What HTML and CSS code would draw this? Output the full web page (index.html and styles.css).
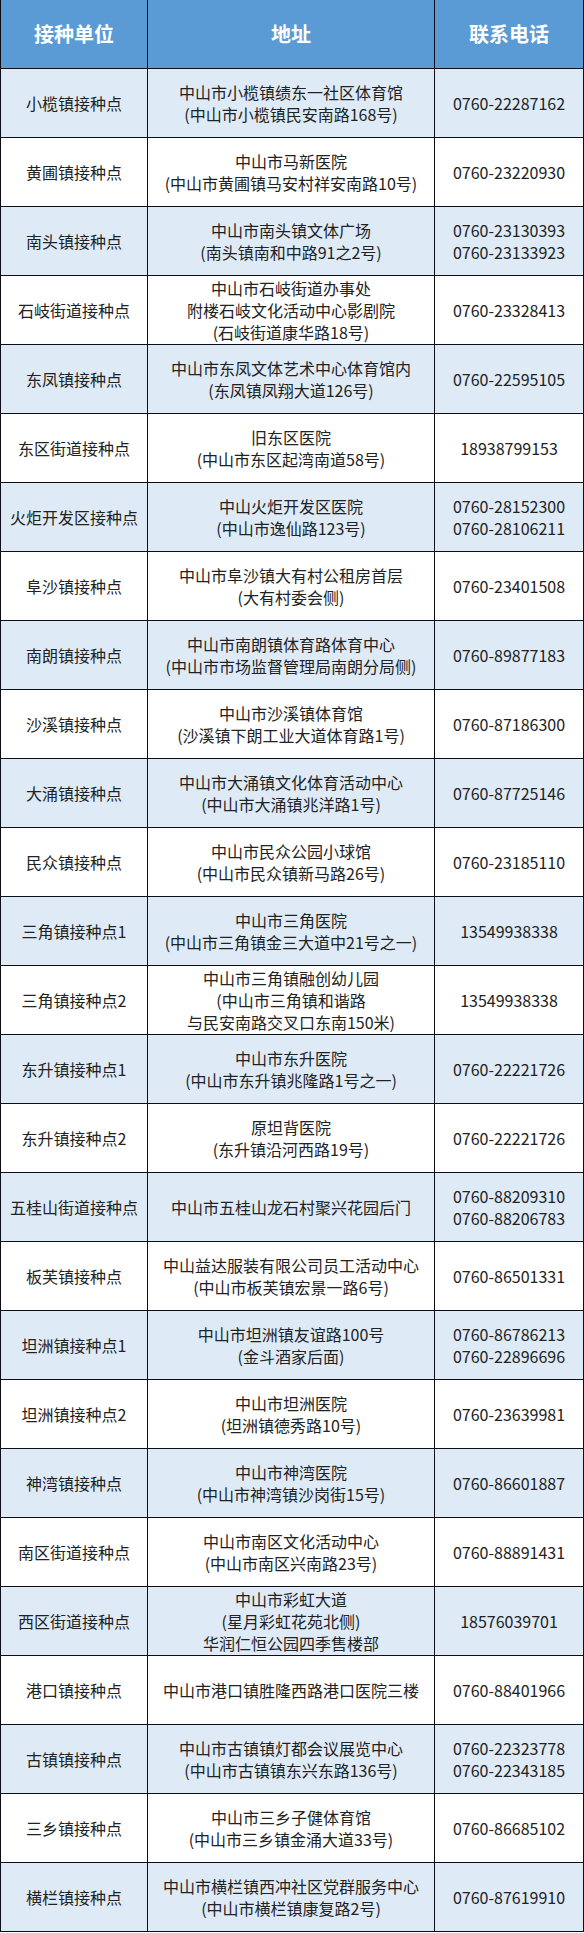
FILE: index.html
```html
<!DOCTYPE html>
<html lang="zh-CN">
<head>
<meta charset="utf-8">
<title>接种单位</title>
<link rel="stylesheet" href="styles.css">
</head>
<body>
<div class="table">
  <div class="row head"><div class="cell c1">接种单位</div><div class="cell c2">地址</div><div class="cell c3">联系电话</div></div>

  <div class="row alt"><div class="cell c1">小榄镇接种点</div><div class="cell c2"><span>中山市小榄镇绩东一社区体育馆</span><span>(中山市小榄镇民安南路168号)</span></div><div class="cell c3"><span>0760-22287162</span></div></div>
  <div class="row"><div class="cell c1">黄圃镇接种点</div><div class="cell c2"><span>中山市马新医院</span><span>(中山市黄圃镇马安村祥安南路10号)</span></div><div class="cell c3"><span>0760-23220930</span></div></div>
  <div class="row alt"><div class="cell c1">南头镇接种点</div><div class="cell c2"><span>中山市南头镇文体广场</span><span>(南头镇南和中路91之2号)</span></div><div class="cell c3"><span>0760-23130393</span><span>0760-23133923</span></div></div>
  <div class="row"><div class="cell c1">石岐街道接种点</div><div class="cell c2"><span>中山市石岐街道办事处</span><span>附楼石岐文化活动中心影剧院</span><span>(石岐街道康华路18号)</span></div><div class="cell c3"><span>0760-23328413</span></div></div>
  <div class="row alt"><div class="cell c1">东凤镇接种点</div><div class="cell c2"><span>中山市东凤文体艺术中心体育馆内</span><span>(东凤镇凤翔大道126号)</span></div><div class="cell c3"><span>0760-22595105</span></div></div>
  <div class="row"><div class="cell c1">东区街道接种点</div><div class="cell c2"><span>旧东区医院</span><span>(中山市东区起湾南道58号)</span></div><div class="cell c3"><span>18938799153</span></div></div>
  <div class="row alt"><div class="cell c1">火炬开发区接种点</div><div class="cell c2"><span>中山火炬开发区医院</span><span>(中山市逸仙路123号)</span></div><div class="cell c3"><span>0760-28152300</span><span>0760-28106211</span></div></div>
  <div class="row"><div class="cell c1">阜沙镇接种点</div><div class="cell c2"><span>中山市阜沙镇大有村公租房首层</span><span>(大有村委会侧)</span></div><div class="cell c3"><span>0760-23401508</span></div></div>
  <div class="row alt"><div class="cell c1">南朗镇接种点</div><div class="cell c2"><span>中山市南朗镇体育路体育中心</span><span>(中山市市场监督管理局南朗分局侧)</span></div><div class="cell c3"><span>0760-89877183</span></div></div>
  <div class="row"><div class="cell c1">沙溪镇接种点</div><div class="cell c2"><span>中山市沙溪镇体育馆</span><span>(沙溪镇下朗工业大道体育路1号)</span></div><div class="cell c3"><span>0760-87186300</span></div></div>
  <div class="row alt"><div class="cell c1">大涌镇接种点</div><div class="cell c2"><span>中山市大涌镇文化体育活动中心</span><span>(中山市大涌镇兆洋路1号)</span></div><div class="cell c3"><span>0760-87725146</span></div></div>
  <div class="row"><div class="cell c1">民众镇接种点</div><div class="cell c2"><span>中山市民众公园小球馆</span><span>(中山市民众镇新马路26号)</span></div><div class="cell c3"><span>0760-23185110</span></div></div>
  <div class="row alt"><div class="cell c1">三角镇接种点1</div><div class="cell c2"><span>中山市三角医院</span><span>(中山市三角镇金三大道中21号之一)</span></div><div class="cell c3"><span>13549938338</span></div></div>
  <div class="row"><div class="cell c1">三角镇接种点2</div><div class="cell c2"><span>中山市三角镇融创幼儿园</span><span>(中山市三角镇和谐路</span><span>与民安南路交叉口东南150米)</span></div><div class="cell c3"><span>13549938338</span></div></div>
  <div class="row alt"><div class="cell c1">东升镇接种点1</div><div class="cell c2"><span>中山市东升医院</span><span>(中山市东升镇兆隆路1号之一)</span></div><div class="cell c3"><span>0760-22221726</span></div></div>
  <div class="row"><div class="cell c1">东升镇接种点2</div><div class="cell c2"><span>原坦背医院</span><span>(东升镇沿河西路19号)</span></div><div class="cell c3"><span>0760-22221726</span></div></div>
  <div class="row alt"><div class="cell c1">五桂山街道接种点</div><div class="cell c2"><span>中山市五桂山龙石村聚兴花园后门</span></div><div class="cell c3"><span>0760-88209310</span><span>0760-88206783</span></div></div>
  <div class="row"><div class="cell c1">板芙镇接种点</div><div class="cell c2"><span>中山益达服装有限公司员工活动中心</span><span>(中山市板芙镇宏景一路6号)</span></div><div class="cell c3"><span>0760-86501331</span></div></div>
  <div class="row alt"><div class="cell c1">坦洲镇接种点1</div><div class="cell c2"><span>中山市坦洲镇友谊路100号</span><span>(金斗酒家后面)</span></div><div class="cell c3"><span>0760-86786213</span><span>0760-22896696</span></div></div>
  <div class="row"><div class="cell c1">坦洲镇接种点2</div><div class="cell c2"><span>中山市坦洲医院</span><span>(坦洲镇德秀路10号)</span></div><div class="cell c3"><span>0760-23639981</span></div></div>
  <div class="row alt"><div class="cell c1">神湾镇接种点</div><div class="cell c2"><span>中山市神湾医院</span><span>(中山市神湾镇沙岗街15号)</span></div><div class="cell c3"><span>0760-86601887</span></div></div>
  <div class="row"><div class="cell c1">南区街道接种点</div><div class="cell c2"><span>中山市南区文化活动中心</span><span>(中山市南区兴南路23号)</span></div><div class="cell c3"><span>0760-88891431</span></div></div>
  <div class="row alt"><div class="cell c1">西区街道接种点</div><div class="cell c2"><span>中山市彩虹大道</span><span>(星月彩虹花苑北侧)</span><span>华润仁恒公园四季售楼部</span></div><div class="cell c3"><span>18576039701</span></div></div>
  <div class="row"><div class="cell c1">港口镇接种点</div><div class="cell c2"><span>中山市港口镇胜隆西路港口医院三楼</span></div><div class="cell c3"><span>0760-88401966</span></div></div>
  <div class="row alt"><div class="cell c1">古镇镇接种点</div><div class="cell c2"><span>中山市古镇镇灯都会议展览中心</span><span>(中山市古镇镇东兴东路136号)</span></div><div class="cell c3"><span>0760-22323778</span><span>0760-22343185</span></div></div>
  <div class="row"><div class="cell c1">三乡镇接种点</div><div class="cell c2"><span>中山市三乡子健体育馆</span><span>(中山市三乡镇金涌大道33号)</span></div><div class="cell c3"><span>0760-86685102</span></div></div>
  <div class="row alt"><div class="cell c1">横栏镇接种点</div><div class="cell c2"><span>中山市横栏镇西冲社区党群服务中心</span><span>(中山市横栏镇康复路2号)</span></div><div class="cell c3"><span>0760-87619910</span></div></div>
</div>
</body>
</html>
```

FILE: styles.css
```css
html, body {
  margin: 0;
  padding: 0;
  background: #ffffff;
}

.table {
  width: 584px;
  display: flex;
  flex-direction: column;
  font-family: "Noto Sans CJK SC", "Noto Sans", sans-serif;
  font-size: 16px;
  color: #222222;
}

.row {
  display: grid;
  grid-template-columns: 148px 287px 149px;
  height: 69px;
  background: #ffffff;
}

.row.alt {
  background: #deebf7;
}

.row.head {
  background: #5b9bd5;
  color: #ffffff;
  font-weight: 700;
  font-size: 20px;
}

.cell {
  box-sizing: border-box;
  display: flex;
  flex-direction: column;
  align-items: center;
  justify-content: center;
  text-align: center;
  line-height: 22px;
  border-right: 1.5px solid #0d0d1a;
  border-bottom: 1.5px solid #0d0d1a;
  white-space: nowrap;
}

.c1 {
  border-left: 1.5px solid #0d0d1a;
}

.row.head .cell {
  line-height: 26px;
}
```
